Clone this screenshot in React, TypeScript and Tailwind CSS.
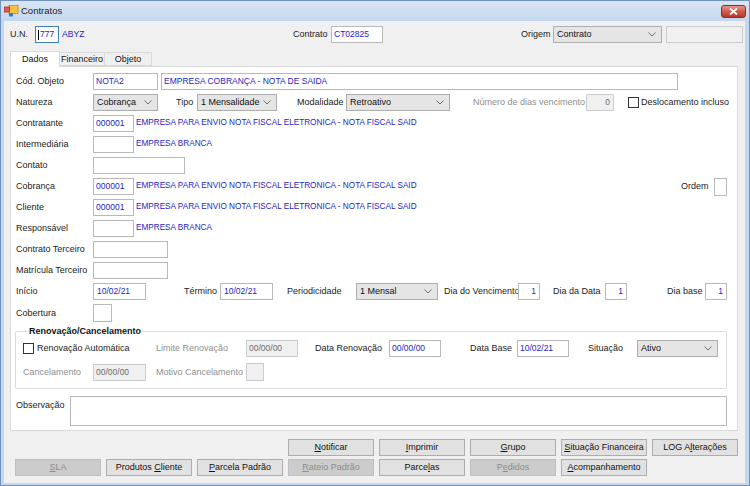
import React from 'react';
import clsx from 'clsx';

type BoxProps = { className?: string; children?: React.ReactNode };

const BLUE = 'text-[#2424c8]';

const Lbl: React.FC<BoxProps & { gray?: boolean }> = ({ className, gray, children }) => (
  <span
    className={clsx(
      'shrink-0 whitespace-nowrap text-[9px] leading-none',
      gray ? 'text-[#8f8f8f]' : 'text-[#1b1b1b]',
      className
    )}
  >
    {children}
  </span>
);

const Txt: React.FC<BoxProps & { disabled?: boolean; right?: boolean }> = ({ className, disabled, right, children }) => (
  <div
    className={clsx(
      'flex h-[17px] shrink-0 items-center border px-[2px] text-[8.5px] leading-none',
      disabled ? 'border-[#cccccc] bg-[#f0f0f0] text-[#6d6d6d]' : 'border-[#b9b9b9] bg-white text-[#2424c8]',
      right && 'justify-end pr-[3px]',
      className
    )}
  >
    {children}
  </div>
);

const Combo: React.FC<BoxProps & { value: string }> = ({ className, value }) => (
  <div
    className={clsx(
      'flex h-[17px] shrink-0 items-center justify-between border border-[#adadad] bg-[#e5e5e5] pl-[3px] pr-[5px] text-[9px] leading-none text-[#111]',
      className
    )}
  >
    <span>{value}</span>
    <svg width="8" height="5" viewBox="0 0 8 5">
      <path d="M0.5 0.5 L4 4 L7.5 0.5" fill="none" stroke="#707070" strokeWidth="1" />
    </svg>
  </div>
);

const Check: React.FC<BoxProps> = ({ className }) => (
  <span className={clsx('block h-[11px] w-[11px] shrink-0 border border-[#333333] bg-white', className)} />
);

const Btn: React.FC<BoxProps & { disabled?: boolean }> = ({ disabled, children }) => (
  <div
    className={clsx(
      'flex h-[17px] w-[86px] shrink-0 items-center justify-center border text-[9px] leading-none',
      disabled ? 'border-[#bfbfbf] bg-[#cccccc] text-[#8d8d8d]' : 'border-[#adadad] bg-[#e1e1e1] text-[#111]'
    )}
  >
    <span>{children}</span>
  </div>
);

const Empresa: React.FC<BoxProps> = ({ children }) => (
  <span className={clsx('ml-[2px] whitespace-nowrap text-[8.2px] leading-none', BLUE)}>{children}</span>
);

const Row: React.FC<BoxProps> = ({ className, children }) => (
  <div className={clsx('flex h-[17px] items-center', className)}>{children}</div>
);

const EMPRESA_NF = 'EMPRESA PARA ENVIO NOTA FISCAL ELETRONICA - NOTA FISCAL SAID';

export default function App() {
  return (
    <div className="flex h-[486px] w-[750px] flex-col border border-[#6f93bd] bg-[#c4d7ed] font-['Liberation_Sans',Arial,sans-serif]">
      {/* title bar */}
      <div className="flex h-[20px] shrink-0 items-center justify-between bg-gradient-to-b from-[#d9e6f4] to-[#c4d7ed]">
        <div className="flex items-center pl-[3px]">
          <svg width="15" height="12" viewBox="0 0 15 12">
            <rect x="5" y="0.5" width="9" height="8" fill="#f5c342" stroke="#c98a12" strokeWidth="0.8" />
            <rect x="0.5" y="2" width="5" height="5" fill="#e35b4f" stroke="#a93428" strokeWidth="0.8" />
            <rect x="5" y="8" width="4" height="3.5" fill="#3a78d4" />
          </svg>
          <span className="ml-[2px] text-[9.5px] text-[#1e1e1e]">Contratos</span>
        </div>
        <div className="mr-[3px] flex h-[13px] w-[25px] items-center justify-center rounded-[3px] border border-[#8b2d24] bg-gradient-to-b from-[#e8968a] via-[#cf5a48] to-[#b8382a]">
          <svg width="9" height="7" viewBox="0 0 9 7">
            <path d="M1 0.5 L8 6.5 M8 0.5 L1 6.5" stroke="#ffffff" strokeWidth="1.8" />
          </svg>
        </div>
      </div>

      {/* body */}
      <div className="mb-[2px] ml-[3px] mr-[4px] flex-1 bg-[#f0f0f0] pl-[6px] pt-[5px]">
        <Row>
          <Lbl className="w-[25px]">U.N.</Lbl>
          <div className="flex h-[17px] w-[24px] shrink-0 items-center border border-[#3c7fc1] bg-white pl-[2px] text-[8.5px] leading-none text-[#2424c8]">
            <span className="mr-px h-[10px] w-px bg-black" />
            777
          </div>
          <span className={clsx('ml-[3px] w-[231px] shrink-0 text-[8.6px] leading-none', BLUE)}>ABYZ</span>
          <Lbl className="w-[38px]">Contrato</Lbl>
          <Txt className="w-[52px]">CT02825</Txt>
          <span className="w-[138px] shrink-0" />
          <Lbl className="w-[32px]">Origem</Lbl>
          <Combo className="w-[109px]" value="Contrato" />
          <div className="ml-[4px] h-[17px] w-[77px] shrink-0 border border-[#cccccc] bg-[#f0f0f0]" />
        </Row>

        {/* tabs */}
        <div className="mt-[7px] flex h-[16px] items-end">
          <div className="relative z-10 -mb-px flex h-[16px] w-[50px] items-center justify-center border border-b-0 border-[#d9d9d9] bg-white text-[9px] leading-none text-[#111]">
            Dados
          </div>
          <div className="flex h-[14px] w-[45px] items-center justify-center border border-l-0 border-[#d9d9d9] bg-[#f0f0f0] text-[9px] leading-none text-[#111]">
            Financeiro
          </div>
          <div className="flex h-[14px] w-[47px] items-center justify-center border border-l-0 border-[#d9d9d9] bg-[#f0f0f0] text-[9px] leading-none text-[#111]">
            Objeto
          </div>
        </div>

        {/* panel */}
        <div className="w-[728px] border border-[#d9d9d9] bg-white pb-[4px] pl-[5px] pr-[10px] pt-[6px]">
          <div className="flex flex-col gap-[4px]">
            <Row>
              <Lbl className="w-[77px]">Cód. Objeto</Lbl>
              <Txt className="w-[65px]">NOTA2</Txt>
              <Txt className="ml-[3px] w-[517px] text-[8.2px]">EMPRESA COBRANÇA - NOTA DE SAIDA</Txt>
            </Row>
            <Row>
              <Lbl className="w-[77px]">Natureza</Lbl>
              <Combo className="w-[65px]" value="Cobrança" />
              <Lbl className="ml-[18px] w-[21px]">Tipo</Lbl>
              <Combo className="w-[80px]" value="1 Mensalidade" />
              <Lbl className="ml-[20px] w-[49px]">Modalidade</Lbl>
              <Combo className="w-[104px]" value="Retroativo" />
              <Lbl gray className="ml-[23px] w-[113px]">Número de dias vencimento</Lbl>
              <Txt disabled right className="w-[28px]">0</Txt>
              <Check className="ml-[14px]" />
              <Lbl className="ml-[2px]">Deslocamento incluso</Lbl>
            </Row>
            <Row>
              <Lbl className="w-[77px]">Contratante</Lbl>
              <Txt className="w-[41px]">000001</Txt>
              <Empresa>{EMPRESA_NF}</Empresa>
            </Row>
            <Row>
              <Lbl className="w-[77px]">Intermediária</Lbl>
              <Txt className="w-[41px]" />
              <Empresa>EMPRESA BRANCA</Empresa>
            </Row>
            <Row>
              <Lbl className="w-[77px]">Contato</Lbl>
              <Txt className="w-[92px]" />
            </Row>
            <Row>
              <Lbl className="w-[77px]">Cobrança</Lbl>
              <Txt className="w-[41px]">000001</Txt>
              <Empresa>{EMPRESA_NF}</Empresa>
              <span className="flex-1" />
              <Lbl className="w-[33px]">Ordem</Lbl>
              <Txt className="h-[18px] w-[13px]" />
            </Row>
            <Row>
              <Lbl className="w-[77px]">Cliente</Lbl>
              <Txt className="w-[41px]">000001</Txt>
              <Empresa>{EMPRESA_NF}</Empresa>
            </Row>
            <Row>
              <Lbl className="w-[77px]">Responsável</Lbl>
              <Txt className="w-[41px]" />
              <Empresa>EMPRESA BRANCA</Empresa>
            </Row>
            <Row>
              <Lbl className="w-[77px]">Contrato Terceiro</Lbl>
              <Txt className="w-[75px]" />
            </Row>
            <Row>
              <Lbl className="w-[77px]">Matrícula Terceiro</Lbl>
              <Txt className="w-[75px]" />
            </Row>
            <Row>
              <Lbl className="w-[77px]">Início</Lbl>
              <Txt className="w-[53px] pl-[3px]">10/02/21</Txt>
              <Lbl className="ml-[38px] w-[36px]">Término</Lbl>
              <Txt className="w-[53px] pl-[3px]">10/02/21</Txt>
              <Lbl className="ml-[14px] w-[69px]">Periodicidade</Lbl>
              <Combo className="w-[82px]" value="1 Mensal" />
              <Lbl className="ml-[6px] w-[74px] text-[8.6px]">Dia do Vencimento</Lbl>
              <Txt right className="w-[22px]">1</Txt>
              <Lbl className="ml-[13px] w-[52px]">Dia da Data</Lbl>
              <Txt right className="w-[22px]">1</Txt>
              <span className="flex-1" />
              <Lbl className="w-[38px]">Dia base</Lbl>
              <Txt right className="w-[22px]">1</Txt>
            </Row>
            <Row className="h-[18px]">
              <Lbl className="w-[77px]">Cobertura</Lbl>
              <Txt className="h-[18px] w-[19px]" />
            </Row>
          </div>

          <fieldset className="-ml-px mt-[3px] rounded-[2px] border border-[#dcdcdc] pb-[7px] pl-[7px]">
            <legend className="ml-[5px] px-px text-[9px] font-bold leading-[12px] text-[#111]">
              Renovação/Cancelamento
            </legend>
            <Row className="mt-[3px]">
              <Check />
              <Lbl className="w-[122px] pl-[3px]">Renovação Automática</Lbl>
              <Lbl gray className="w-[90px]">Limite Renovação</Lbl>
              <Txt disabled className="w-[52px]">00/00/00</Txt>
              <Lbl className="ml-[17px] w-[74px]">Data Renovação</Lbl>
              <Txt className="w-[52px]">00/00/00</Txt>
              <Lbl className="ml-[29px] w-[47px]">Data Base</Lbl>
              <Txt className="w-[52px]">10/02/21</Txt>
              <Lbl className="ml-[19px] w-[49px]">Situação</Lbl>
              <Combo className="w-[81px]" value="Ativo" />
            </Row>
            <Row className="mt-[6px] h-[18px]">
              <Lbl gray className="w-[70px]">Cancelamento</Lbl>
              <Txt disabled className="w-[53px]">00/00/00</Txt>
              <Lbl gray className="ml-[10px] w-[90px]">Motivo Cancelamento</Lbl>
              <Txt disabled className="h-[18px] w-[18px]" />
            </Row>
          </fieldset>

          <div className="mt-[7px] flex items-start">
            <Lbl className="w-[54px] pt-[5px]">Observação</Lbl>
            <div className="h-[30px] w-[657px] shrink-0 border border-[#b9b9b9] bg-white" />
          </div>
        </div>

        {/* buttons */}
        <div className="mt-[8px] flex gap-[5px] pl-[278px]">
          <Btn>
            <u>N</u>otificar
          </Btn>
          <Btn>
            <u>I</u>mprimir
          </Btn>
          <Btn>
            <u>G</u>rupo
          </Btn>
          <Btn>
            <u>S</u>ituação Financeira
          </Btn>
          <Btn>
            LOG A<u>l</u>terações
          </Btn>
        </div>
        <div className="mt-[3px] flex gap-[5px] pl-[5px]">
          <Btn disabled>
            <u>S</u>LA
          </Btn>
          <Btn>
            Produtos <u>C</u>liente
          </Btn>
          <Btn>
            <u>P</u>arcela Padrão
          </Btn>
          <Btn disabled>
            <u>R</u>ateio Padrão
          </Btn>
          <Btn>
            Parce<u>l</u>as
          </Btn>
          <Btn disabled>
            P<u>e</u>didos
          </Btn>
          <Btn>
            <u>A</u>companhamento
          </Btn>
        </div>
      </div>
    </div>
  );
}
